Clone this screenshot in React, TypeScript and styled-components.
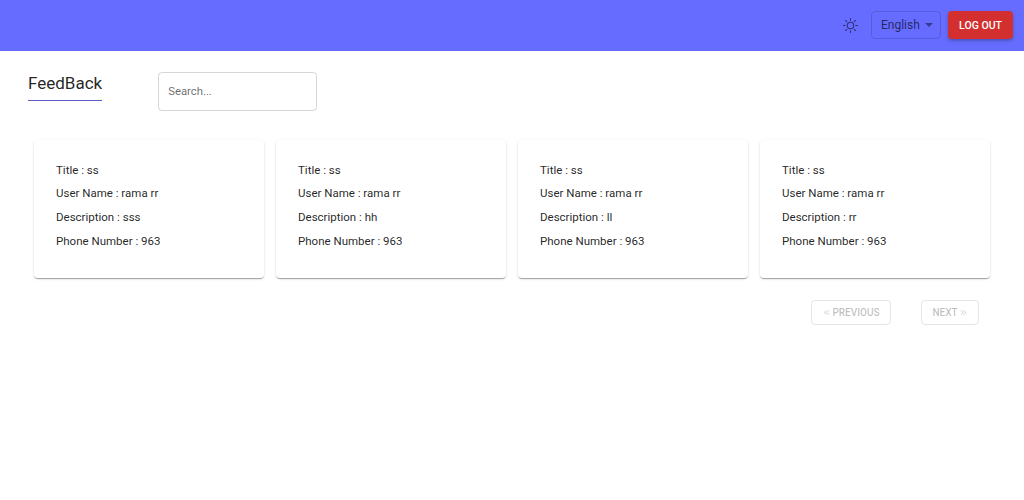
import React from "react";
import styled, { createGlobalStyle } from "styled-components";
import { ChevronsLeft, ChevronsRight } from "lucide-react";

const GlobalStyle = createGlobalStyle`
  body {
    margin: 0;
    background: #fff;
    font-family: Roboto, "Liberation Sans", sans-serif;
    color: rgba(0, 0, 0, 0.87);
  }
`;

const Page = styled.div`
  width: 1024px;
  height: 500px;
  overflow: hidden;
  background: #fff;
`;

const Header = styled.header`
  height: 50.5px;
  background: #666cff;
  display: flex;
  align-items: center;
  justify-content: flex-end;
  padding-right: 11px;
`;

const ThemeButton = styled.button`
  width: 20px;
  height: 20px;
  padding: 0;
  margin-right: 11px;
  border: 0;
  background: none;
  color: rgba(0, 0, 0, 0.55);
  display: flex;
  align-items: center;
  justify-content: center;
`;

const LanguageSelect = styled.div`
  width: 70px;
  height: 28px;
  box-sizing: border-box;
  margin-right: 7px;
  padding-left: 9px;
  border: 1px solid rgba(0, 0, 0, 0.14);
  border-radius: 4px;
  display: flex;
  align-items: center;
  gap: 5px;
  font-size: 12px;
  color: rgba(0, 0, 0, 0.65);
`;

const Caret = styled.span`
  width: 0;
  height: 0;
  border-left: 4px solid transparent;
  border-right: 4px solid transparent;
  border-top: 4px solid rgba(0, 0, 0, 0.45);
`;

const LogoutButton = styled.button`
  width: 65px;
  height: 28px;
  padding: 0;
  border: 0;
  border-radius: 4px;
  background: #d32f2f;
  color: #fff;
  font-family: inherit;
  font-size: 10.5px;
  font-weight: 500;
  box-shadow: 0 2px 3px -1px rgba(0, 0, 0, 0.2), 0 2px 4px rgba(0, 0, 0, 0.14);
`;

const Toolbar = styled.div`
  display: flex;
  align-items: flex-start;
  padding: 21px 0 0 28px;
`;

const Title = styled.h1`
  margin: 0 56px 0 0;
  height: 28px;
  font-size: 17px;
  font-weight: 400;
  line-height: 23px;
  color: rgba(0, 0, 0, 0.87);
  border-bottom: 1px solid #5a5fc8;
`;

const SearchBox = styled.div`
  width: 159px;
  height: 39px;
  box-sizing: border-box;
  padding-left: 9px;
  display: flex;
  align-items: center;
  border: 1px solid rgba(0, 0, 0, 0.16);
  border-radius: 4px;
  font-size: 11.3px;
  color: rgba(0, 0, 0, 0.6);
`;

const CardGrid = styled.div`
  display: grid;
  grid-template-columns: repeat(4, 230px);
  gap: 12px;
  padding: 29px 0 0 34px;
`;

const Card = styled.article`
  height: 138px;
  box-sizing: border-box;
  padding: 19px 22px;
  border-radius: 4px;
  background: #fff;
  box-shadow: 0 2px 1px -1px rgba(0, 0, 0, 0.2), 0 1px 1px rgba(0, 0, 0, 0.14),
    0 1px 3px rgba(0, 0, 0, 0.12);
`;

const Line = styled.p`
  margin: 0;
  font-size: 11.5px;
  line-height: 23.8px;
  color: rgba(0, 0, 0, 0.87);
`;

const Pagination = styled.nav`
  display: flex;
  justify-content: flex-end;
  gap: 30px;
  padding: 22px 45px 0 0;
`;

const PageButton = styled.button<{ $width: number }>`
  height: 25px;
  width: ${(p) => p.$width}px;
  padding: 0;
  border: 1px solid rgba(0, 0, 0, 0.1);
  border-radius: 4px;
  background: none;
  color: rgba(0, 0, 0, 0.26);
  font-family: inherit;
  font-size: 10px;
  font-weight: 500;
  display: flex;
  align-items: center;
  justify-content: center;
  gap: 1px;
`;

const cards = ["sss", "hh", "ll", "rr"];

function SunIcon() {
  return (
    <svg width="17" height="17" viewBox="0 0 24 24" fill="none" stroke="currentColor" strokeWidth="1.5" strokeLinecap="round">
      <circle cx="12" cy="12" r="4.5" />
      <path d="M12 2v2.5M12 19.5V22M2 12h2.5M19.5 12H22M4.9 4.9l1.8 1.8M17.3 17.3l1.8 1.8M4.9 19.1l1.8-1.8M17.3 6.7l1.8-1.8" />
    </svg>
  );
}

export default function App() {
  return (
    <Page>
      <GlobalStyle />
      <Header>
        <ThemeButton>
          <SunIcon />
        </ThemeButton>
        <LanguageSelect>
          English
          <Caret />
        </LanguageSelect>
        <LogoutButton>LOG OUT</LogoutButton>
      </Header>
      <Toolbar>
        <Title>FeedBack</Title>
        <SearchBox>Search...</SearchBox>
      </Toolbar>
      <CardGrid>
        {cards.map((description) => (
          <Card key={description}>
            <Line>Title : ss</Line>
            <Line>User Name : rama rr</Line>
            <Line>Description : {description}</Line>
            <Line>Phone Number : 963</Line>
          </Card>
        ))}
      </CardGrid>
      <Pagination>
        <PageButton $width={80}>
          <ChevronsLeft size={9} />
          PREVIOUS
        </PageButton>
        <PageButton $width={58}>
          NEXT
          <ChevronsRight size={9} />
        </PageButton>
      </Pagination>
    </Page>
  );
}
